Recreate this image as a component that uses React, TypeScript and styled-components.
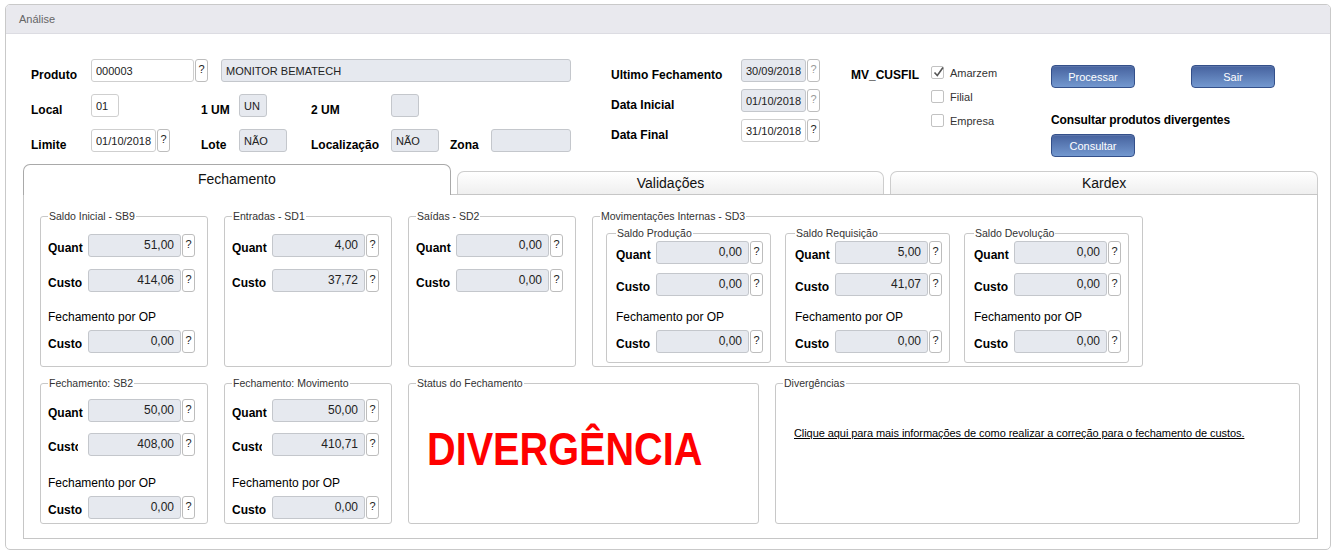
import React from "react";
import styled, { createGlobalStyle } from "styled-components";

const GlobalStyle = createGlobalStyle`
  html, body { margin: 0; padding: 0; background: #fff; }
  body { font-family: "Liberation Sans", Arial, sans-serif; color: #000; }
  * { box-sizing: border-box; }
`;

const Page = styled.div`
  width: 1338px;
  height: 555px;
  padding: 4px 7px 0 5px;
`;
const Window = styled.div`
  height: 546px;
  border: 1px solid #c9c9c9;
  border-radius: 5px;
  overflow: hidden;
  display: flex;
  flex-direction: column;
  background: #fff;
`;
const TitleBar = styled.div`
  height: 29px;
  flex-shrink: 0;
  background: #e9e9ee;
  border-bottom: 1px solid #dcdce2;
  padding-left: 13px;
  font-size: 11px;
  line-height: 28px;
  color: #666;
`;
const Body = styled.div`
  flex: 1;
  display: flex;
  flex-direction: column;
  padding: 0 12px 10px 17px;
`;

/* ---------- top form ---------- */
const TopForm = styled.div`
  height: 130px;
  flex-shrink: 0;
  display: flex;
  align-items: flex-start;
  padding: 25px 0 0 8px;
`;
const LeftGrid = styled.div`
  display: grid;
  grid-template-columns: 60px 110px 38px 72px 80px 59px 41px 80px;
  grid-template-rows: repeat(3, 23px);
  row-gap: 12px;
`;
const Label = styled.div<{ $w?: number }>`
  font-size: 12px;
  font-weight: bold;
  line-height: 14px;
  padding-top: 9px;
  white-space: nowrap;
  ${(p) => (p.$w ? `width: ${p.$w}px; flex-shrink: 0;` : "")}
`;
const Cell = styled.div<{ $span?: boolean }>`
  display: flex;
  align-items: flex-start;
  ${(p) => (p.$span ? "grid-column: 2 / -1;" : "")}
`;
const TextInput = styled.input<{ $w: number; $ro?: boolean; $ml?: number }>`
  width: ${(p) => p.$w}px;
  height: 23px;
  margin: 0 0 0 ${(p) => p.$ml ?? 0}px;
  padding: 0 3px 0 4px;
  border: 1px solid ${(p) => (p.$ro ? "#c4c7cc" : "#cfcfcf")};
  border-radius: 3px;
  background: ${(p) => (p.$ro ? "#e6e9ef" : "#fff")};
  font-family: "Liberation Sans", Arial, sans-serif;
  font-size: 11px;
  color: #222;
  outline: none;
`;
const Help = styled.button<{ $dim?: boolean }>`
  width: 13px;
  height: 23px;
  margin: 0 0 0 1px;
  padding: 0 0 3px;
  flex-shrink: 0;
  border: 1px solid #bdbdbd;
  border-radius: 3px;
  background: #fff;
  font-family: "Liberation Sans", Arial, sans-serif;
  font-size: 11px;
  color: ${(p) => (p.$dim ? "#999" : "#222")};
  cursor: pointer;
`;
const MidBlock = styled.div`
  margin-left: 40px;
  display: flex;
  flex-direction: column;
  gap: 7px;
`;
const MidRow = styled.div`
  display: flex;
  align-items: flex-start;
  height: 23px;
`;
const MidLabel = styled(Label)`
  width: 130px;
  padding-top: 9px;
`;
const ChecksCol = styled.div`
  width: 120px;
  padding-top: 7px;
  display: flex;
  flex-direction: column;
  gap: 11px;
`;
const CheckRow = styled.label`
  display: flex;
  align-items: center;
  gap: 6px;
  height: 13px;
  font-size: 11px;
  color: #333;
`;
const Box = styled.span`
  width: 13px;
  height: 13px;
  border: 1px solid #c2c2c2;
  border-radius: 2px;
  background: #fff;
  position: relative;
  flex-shrink: 0;
  svg {
    position: absolute;
    left: 0;
    top: -2px;
  }
`;
const Actions = styled.div`
  padding-top: 6px;
  display: flex;
  flex-direction: column;
  align-items: flex-start;
`;
const ButtonRow = styled.div`
  display: flex;
  gap: 56px;
`;
const BlueButton = styled.button`
  width: 84px;
  height: 23px;
  border: 1px solid #34508a;
  border-radius: 4px;
  background: linear-gradient(#46629e, #7398cf);
  box-shadow: inset 0 1px 0 rgba(255, 255, 255, 0.12);
  color: #fff;
  font-family: "Liberation Sans", Arial, sans-serif;
  font-size: 11px;
  padding: 0;
  cursor: pointer;
`;
const Caption = styled.div`
  margin-top: 25px;
  font-size: 12px;
  font-weight: bold;
  line-height: 14px;
  letter-spacing: -0.1px;
`;

/* ---------- tabs ---------- */
const TabBar = styled.div`
  height: 30px;
  flex-shrink: 0;
  display: flex;
  align-items: flex-end;
  gap: 6px;
  position: relative;
  z-index: 1;
`;
const Tab = styled.div<{ $active?: boolean }>`
  flex: 1;
  height: ${(p) => (p.$active ? 31 : 23)}px;
  margin-bottom: ${(p) => (p.$active ? -1 : 0)}px;
  border: 1px solid ${(p) => (p.$active ? "#a9a9a9" : "#cdcdcd")};
  border-bottom: none;
  border-radius: 7px 7px 0 0;
  background: ${(p) => (p.$active ? "#fff" : "linear-gradient(#fff, #efefef)")};
  font-size: 14px;
  line-height: ${(p) => (p.$active ? 28 : 22)}px;
  text-align: center;
  color: #111;
`;
const TabPanel = styled.div`
  flex: 1;
  border: 1px solid #c6c6c6;
  padding: 15px 0 0 16px;
  display: flex;
  flex-direction: column;
  gap: 10px;
`;
const GroupRow = styled.div`
  display: flex;
  gap: 16px;
  align-items: flex-start;
`;

/* ---------- fieldsets ---------- */
const Group = styled.fieldset<{ $w: number; $h: number; $pad: string }>`
  width: ${(p) => p.$w}px;
  height: ${(p) => p.$h}px;
  flex-shrink: 0;
  margin: 0;
  padding: ${(p) => p.$pad};
  min-width: 0;
  border: 1px solid #c8c8c8;
  border-radius: 3px;
`;
const Legend = styled.legend<{ $ml?: number }>`
  margin-left: ${(p) => p.$ml ?? 0}px;
  padding: 0 1px;
  font-size: 10.5px;
  line-height: 12px;
  color: #333;
`;
const Stack = styled.div<{ $gap: number }>`
  display: flex;
  flex-direction: column;
  gap: ${(p) => p.$gap}px;
`;
const FieldRow = styled.div`
  display: flex;
  align-items: center;
  height: 23px;
`;
const FieldLabel = styled.div<{ $clip?: boolean }>`
  width: 40px;
  flex-shrink: 0;
  padding-top: 4px;
  font-size: 12px;
  font-weight: bold;
  white-space: nowrap;
  overflow: hidden;
  span {
    display: block;
    width: ${(p) => (p.$clip ? 30 : 40)}px;
    overflow: hidden;
  }
`;
const ValueBox = styled.div`
  width: 93px;
  height: 23px;
  border: 1px solid #c4c7cc;
  border-radius: 3px;
  background: #e6e9ef;
  padding: 0 6px 2px 0;
  text-align: right;
  font-size: 12px;
  line-height: 20px;
  color: #222;
`;
const SubTitle = styled.div<{ $mt: number; $mb: number }>`
  margin: ${(p) => p.$mt}px 0 ${(p) => p.$mb}px;
  font-size: 12px;
  line-height: 14px;
  white-space: nowrap;
`;
const MovRow = styled.div`
  display: flex;
  gap: 14px;
  margin-left: 6px;
`;
const StatusText = styled.div`
  padding: 37px 0 0 18px;
  span {
    display: inline-block;
    transform: scaleX(0.862);
    transform-origin: left center;
    font-size: 46px;
    line-height: 46px;
    font-weight: bold;
    color: #f00;
  }
`;
const HelpLink = styled.a`
  display: block;
  margin: 38px 0 0 18px;
  font-size: 11px;
  line-height: 13px;
  letter-spacing: -0.07px;
  color: #000;
  text-decoration: underline;
  cursor: pointer;
`;

/* ---------- pieces ---------- */
type Spacing = { gap: number; mt: number; mb: number };

const Field = ({ label, value, clip }: { label: string; value: string; clip?: boolean }) => (
  <FieldRow>
    <FieldLabel $clip={clip}>
      <span>{label}</span>
    </FieldLabel>
    <ValueBox>{value}</ValueBox>
    <Help>?</Help>
  </FieldRow>
);

const CostBlock = ({
  quant,
  custo,
  op,
  sp,
  clip,
}: {
  quant: string;
  custo: string;
  op?: string;
  sp: Spacing;
  clip?: boolean;
}) => (
  <Stack $gap={sp.gap}>
    <Field label="Quant" value={quant} />
    <Field label="Custo" value={custo} clip={clip} />
    {op !== undefined && (
      <>
        <SubTitle $mt={sp.mt} $mb={sp.mb}>
          Fechamento por OP
        </SubTitle>
        <Field label="Custo" value={op} />
      </>
    )}
  </Stack>
);

const Check = ({ label, checked }: { label: string; checked?: boolean }) => (
  <CheckRow>
    <Box>
      {checked && (
        <svg width="14" height="14" viewBox="0 0 14 14">
          <path d="M2.5 7.5 L5.3 10.5 L11 2.5" fill="none" stroke="#555" strokeWidth="1.6" />
        </svg>
      )}
    </Box>
    {label}
  </CheckRow>
);

const row1: Spacing = { gap: 12, mt: 6, mb: -6 };
const inner: Spacing = { gap: 9, mt: 5, mb: -3 };
const row2: Spacing = { gap: 11, mt: 9, mb: -5 };

export default function App() {
  return (
    <Page>
      <GlobalStyle />
      <Window>
        <TitleBar>Análise</TitleBar>
        <Body>
          <TopForm>
            <LeftGrid>
              <Label>Produto</Label>
              <Cell $span>
                <TextInput $w={103} defaultValue="000003" />
                <Help>?</Help>
                <TextInput $w={350} $ml={13} $ro readOnly defaultValue="MONITOR BEMATECH" />
              </Cell>

              <Label>Local</Label>
              <Cell>
                <TextInput $w={28} defaultValue="01" />
              </Cell>
              <Label>1 UM</Label>
              <Cell>
                <TextInput $w={28} $ro readOnly defaultValue="UN" />
              </Cell>
              <Label>2 UM</Label>
              <Cell>
                <TextInput $w={28} $ro readOnly defaultValue="" />
              </Cell>
              <div />
              <div />

              <Label>Limite</Label>
              <Cell>
                <TextInput $w={65} defaultValue="01/10/2018" />
                <Help>?</Help>
              </Cell>
              <Label>Lote</Label>
              <Cell>
                <TextInput $w={48} $ro readOnly defaultValue="NÃO" />
              </Cell>
              <Label>Localização</Label>
              <Cell>
                <TextInput $w={48} $ro readOnly defaultValue="NÃO" />
              </Cell>
              <Label>Zona</Label>
              <Cell>
                <TextInput $w={80} $ro readOnly defaultValue="" />
              </Cell>
            </LeftGrid>

            <MidBlock>
              <MidRow>
                <MidLabel>Ultimo Fechamento</MidLabel>
                <TextInput $w={65} $ro readOnly defaultValue="30/09/2018" />
                <Help $dim>?</Help>
              </MidRow>
              <MidRow>
                <MidLabel>Data Inicial</MidLabel>
                <TextInput $w={65} $ro readOnly defaultValue="01/10/2018" />
                <Help $dim>?</Help>
              </MidRow>
              <MidRow>
                <MidLabel>Data Final</MidLabel>
                <TextInput $w={65} defaultValue="31/10/2018" />
                <Help>?</Help>
              </MidRow>
            </MidBlock>

            <Label $w={80} style={{ marginLeft: 31 }}>
              MV_CUSFIL
            </Label>
            <ChecksCol>
              <Check label="Amarzem" checked />
              <Check label="Filial" />
              <Check label="Empresa" />
            </ChecksCol>

            <Actions>
              <ButtonRow>
                <BlueButton>Processar</BlueButton>
                <BlueButton>Sair</BlueButton>
              </ButtonRow>
              <Caption>Consultar produtos divergentes</Caption>
              <BlueButton style={{ marginTop: 7 }}>Consultar</BlueButton>
            </Actions>
          </TopForm>

          <TabBar>
            <Tab $active>Fechamento</Tab>
            <Tab>Validações</Tab>
            <Tab>Kardex</Tab>
          </TabBar>

          <TabPanel>
            <GroupRow>
              <Group $w={168} $h={157} $pad="12px 0 0 7px">
                <Legend>Saldo Inicial - SB9</Legend>
                <CostBlock quant="51,00" custo="414,06" op="0,00" sp={row1} />
              </Group>
              <Group $w={168} $h={157} $pad="12px 0 0 7px">
                <Legend>Entradas - SD1</Legend>
                <CostBlock quant="4,00" custo="37,72" sp={row1} />
              </Group>
              <Group $w={168} $h={157} $pad="12px 0 0 7px">
                <Legend>Saídas - SD2</Legend>
                <CostBlock quant="0,00" custo="0,00" sp={row1} />
              </Group>
              <Group $w={551} $h={157} $pad="5px 0 0 7px">
                <Legend>Movimentações Internas - SD3</Legend>
                <MovRow>
                  <Group $w={165} $h={136} $pad="2px 0 0 9px">
                    <Legend>Saldo Produção</Legend>
                    <CostBlock quant="0,00" custo="0,00" op="0,00" sp={inner} />
                  </Group>
                  <Group $w={165} $h={136} $pad="2px 0 0 9px">
                    <Legend>Saldo Requisição</Legend>
                    <CostBlock quant="5,00" custo="41,07" op="0,00" sp={inner} />
                  </Group>
                  <Group $w={165} $h={136} $pad="2px 0 0 9px">
                    <Legend>Saldo Devolução</Legend>
                    <CostBlock quant="0,00" custo="0,00" op="0,00" sp={inner} />
                  </Group>
                </MovRow>
              </Group>
            </GroupRow>

            <GroupRow>
              <Group $w={168} $h={147} $pad="10px 0 0 7px">
                <Legend>Fechamento: SB2</Legend>
                <CostBlock quant="50,00" custo="408,00" op="0,00" sp={row2} clip />
              </Group>
              <Group $w={168} $h={147} $pad="10px 0 0 7px">
                <Legend>Fechamento: Movimento</Legend>
                <CostBlock quant="50,00" custo="410,71" op="0,00" sp={row2} clip />
              </Group>
              <Group $w={351} $h={147} $pad="0">
                <Legend $ml={7}>Status do Fechamento</Legend>
                <StatusText>
                  <span>DIVERGÊNCIA</span>
                </StatusText>
              </Group>
              <Group $w={525} $h={147} $pad="0">
                <Legend $ml={7}>Divergências</Legend>
                <HelpLink>
                  Clique aqui para mais informações de como realizar a correção para o fechamento de custos.
                </HelpLink>
              </Group>
            </GroupRow>
          </TabPanel>
        </Body>
      </Window>
    </Page>
  );
}
